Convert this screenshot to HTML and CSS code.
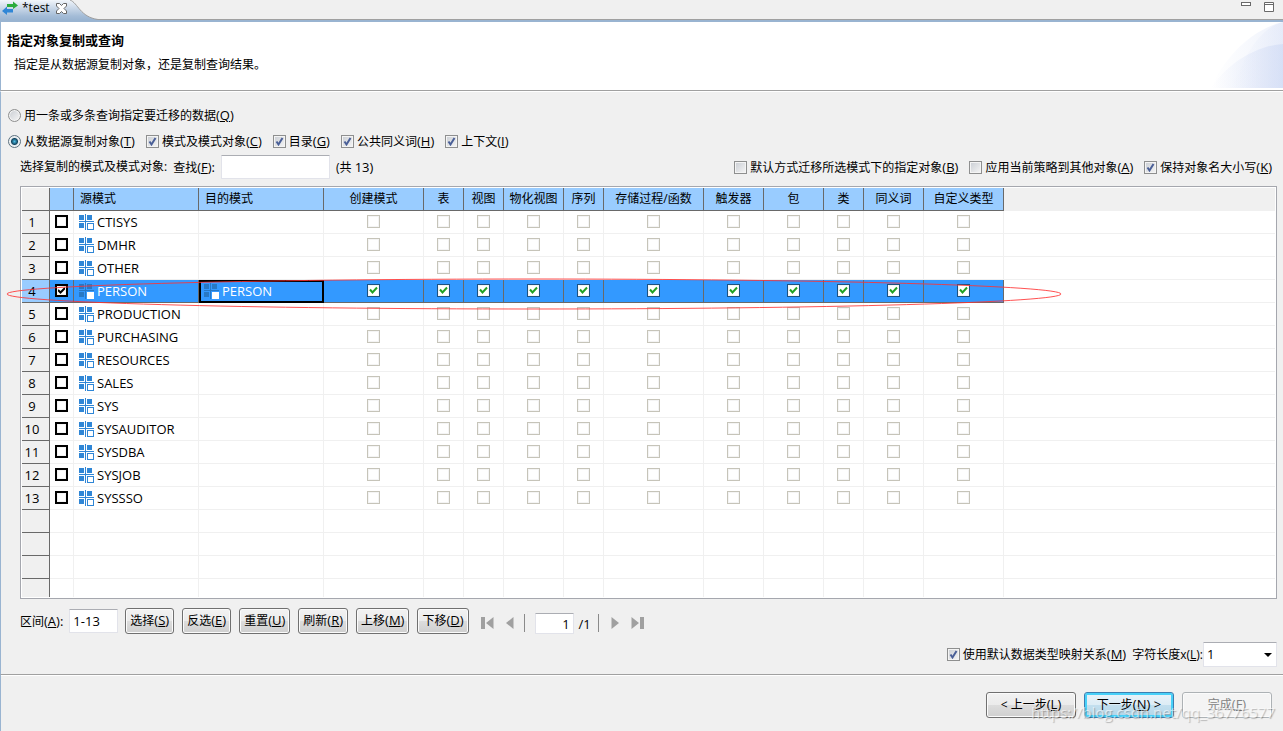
FILE: index.html
```html
<!DOCTYPE html>
<html lang="zh-CN">
<head>
<meta charset="utf-8">
<title>test</title>
<link rel="stylesheet" href="styles.css">
</head>
<body>
<div class="editor">
  <div class="tabbar">
    <div class="tab">
      <svg class="tab-shape" width="100" height="20" viewBox="0 0 100 20" aria-hidden="true">
        <defs><linearGradient id="tabFill" x1="0" y1="0" x2="0" y2="1"><stop offset="0" stop-color="#f1f5fa"/><stop offset=".8" stop-color="#a4bcd7"/><stop offset="1" stop-color="#99b4d1"/></linearGradient></defs>
        <path d="M0 0H70C78 3 80 17 98 19.5V20H0Z" fill="url(#tabFill)"/>
        <path d="M70 0C78 3 80 17 98 19.5" fill="none" stroke="#a0a0a0"/>
      </svg>
      <svg class="tab-icon" width="16" height="14" viewBox="0 0 16 14" aria-hidden="true">
        <path d="M5 3H11V0.500L16 4.500L11 8V6H5Z" fill="#2bab3c"/>
        <path d="M11 8H5V5.500L0 10L5 14V11.500H11Z" fill="#2f86d6"/>
      </svg>
      <span class="tab-title">*test</span>
      <button class="tab-close" aria-label="关闭"><svg width="11" height="11" viewBox="0 0 11 11"><path d="M.5.5H3.500L5.500 2.500L7.500.5H10.500V3L8 5.500L10.500 8V10.500H7.500L5.500 8.500L3.500 10.500H.5V8L3 5.500L.5 3Z" fill="#fff" stroke="#666"/></svg></button>
    </div>
    <div class="window-tools">
      <button aria-label="最小化"><svg width="10" height="10" viewBox="0 0 10 10"><rect x=".5" y=".5" width="9" height="3" fill="#fff" stroke="#696969"/></svg></button>
      <button aria-label="最大化"><svg width="10" height="10" viewBox="0 0 10 10"><path d="M.5.5H9.500V9.500H.5ZM.5 2.500H9.500" fill="#fff" stroke="#696969"/></svg></button>
    </div>
  </div>

  <header class="banner">
    <div>
      <h1>指定对象复制或查询</h1>
      <p>指定是从数据源复制对象，还是复制查询结果。</p>
    </div>
    <svg class="banner-art" width="72" height="66" viewBox="0 0 72 66" aria-hidden="true">
      <defs><linearGradient id="arc"><stop offset="0" stop-color="#dbe3f7" stop-opacity="0"/><stop offset="1" stop-color="#cdd8f4" stop-opacity=".6"/></linearGradient></defs>
      <path d="M0 66C12 38 38 8 72 0V66Z" fill="url(#arc)" opacity=".6"/>
      <path d="M34 38C42 20 56 4 72 0V66H20Z" fill="url(#arc)" opacity=".4"/>
      <path d="M0 66C16 42 44 24 72 22V66Z" fill="url(#arc)"/>
    </svg>
  </header>

  <main class="content">
    <div class="options">
      <label class="choice"><input type="radio" name="mode"><span>用一条或多条查询指定要迁移的数据<span class="key">(<u>Q</u>)</span></span></label>
    </div>
    <div class="options second">
      <label class="choice"><input type="radio" name="mode" checked><span>从数据源复制对象<span class="key">(<u>T</u>)</span></span></label>
      <label class="choice"><input type="checkbox" checked><span>模式及模式对象<span class="key">(<u>C</u>)</span></span></label>
      <label class="choice"><input type="checkbox" checked><span>目录<span class="key">(<u>G</u>)</span></span></label>
      <label class="choice"><input type="checkbox" checked><span>公共同义词<span class="key">(<u>H</u>)</span></span></label>
      <label class="choice"><input type="checkbox" checked><span>上下文<span class="key">(<u>I</u>)</span></span></label>
    </div>
    <div class="filter">
      <span>选择复制的模式及模式对象:</span>
      <label for="find">查找<span class="key">(<u>F</u>):</span></label>
      <input class="field find" id="find" type="text">
      <span>(共 <span class="key">13)</span></span>
      <div class="filter-options">
        <label class="choice"><input type="checkbox"><span>默认方式迁移所选模式下的指定对象<span class="key">(<u>B</u>)</span></span></label>
        <label class="choice"><input type="checkbox"><span>应用当前策略到其他对象<span class="key">(<u>A</u>)</span></span></label>
        <label class="choice"><input type="checkbox" checked><span>保持对象名大小写<span class="key">(<u>K</u>)</span></span></label>
      </div>
    </div>

    <div class="grid-frame">
      <table class="grid">
        <colgroup>
          <col class="w28"><col class="w24"><col class="w125"><col class="w125"><col class="w100"><col class="w40"><col class="w40"><col class="w60"><col class="w40"><col class="w100"><col class="w60"><col class="w60"><col class="w40"><col class="w60"><col class="w80"><col>
        </colgroup>
        <thead>
          <tr><th class="rownum"></th><th></th><th class="left">源模式</th><th class="left">目的模式</th><th>创建模式</th><th>表</th><th>视图</th><th>物化视图</th><th>序列</th><th>存储过程/函数</th><th>触发器</th><th>包</th><th>类</th><th>同义词</th><th>自定义类型</th><th class="rest"></th></tr>
        </thead>
        <tbody id="rows"></tbody>
      </table>
      <svg class="mark" width="1056" height="32" viewBox="0 0 1056 32" aria-hidden="true"><ellipse cx="528" cy="16" rx="527" ry="15" fill="none" stroke="#f33" stroke-width="1" opacity=".85"/></svg>
    </div>

    <div class="toolbar">
      <label for="range">区间<span class="key">(<u>A</u>):</span></label>
      <input class="field range" id="range" type="text" value="1-13">
      <div class="actions">
        <button class="btn">选择<span class="key">(<u>S</u>)</span></button>
        <button class="btn">反选<span class="key">(<u>E</u>)</span></button>
        <button class="btn">重置<span class="key">(<u>U</u>)</span></button>
        <button class="btn">刷新<span class="key">(<u>R</u>)</span></button>
        <button class="btn">上移<span class="key">(<u>M</u>)</span></button>
        <button class="btn">下移<span class="key">(<u>D</u>)</span></button>
      </div>
      <div class="pager">
        <button aria-label="首页"><svg width="13" height="14" viewBox="0 0 13 14"><path d="M0 1H4V13H0ZM12.500 1V13L5 7Z"/></svg></button>
        <button aria-label="上一页"><svg width="8" height="14" viewBox="0 0 8 14"><path d="M7.500 1V13L0 7Z"/></svg></button>
        <span class="sep"></span>
        <input class="field page" type="text" value="1" aria-label="页码">
        <span class="total">/1</span>
        <span class="sep"></span>
        <button aria-label="下一页"><svg width="8" height="14" viewBox="0 0 8 14"><path d="M.5 1V13L8 7Z"/></svg></button>
        <button aria-label="末页"><svg width="13" height="14" viewBox="0 0 13 14"><path d="M9 1H13V13H9ZM.5 1V13L8 7Z"/></svg></button>
      </div>
    </div>

    <div class="mapping">
      <label class="choice"><input type="checkbox" checked><span>使用默认数据类型映射关系<span class="key">(<u>M</u>)</span></span></label>
      <div class="length">
        <label for="len">字符长度x(<u>L</u>):</label>
        <select id="len"><option>1</option><option>2</option></select>
      </div>
    </div>
  </main>

  <footer class="footer">
    <button class="btn wide">&lt; 上一步<span class="key">(<u>L</u>)</span></button>
    <button class="btn wide primary">下一步<span class="key">(<u>N</u>) &gt;</span></button>
    <button class="btn wide" disabled>完成<span class="key">(<u>F</u>)</span></button>
    <span class="watermark">https://blog.csdn.net/qq_36776577</span>
  </footer>
</div>
<script src="rows.js"></script>
</body>
</html>
```

FILE: styles.css
```css
* { box-sizing: border-box; }

body {
  margin: 0;
  background: #f0f0f0;
  color: #000;
  font: 12px/16px "Open Sans", "Noto Sans CJK SC", sans-serif;
}

button, input, select { font: inherit; color: inherit; margin: 0; }
h1, p { margin: 0; }
svg { display: block; }
.key { font-size: 13px; }
u { text-underline-offset: 1px; }

.editor {
  min-height: 100vh;
  display: flex;
  flex-direction: column;
}

/* tab strip */
.tabbar {
  display: flex;
  justify-content: space-between;
  height: 22px;
  border-bottom: 2px solid #99b4d1;
  background: linear-gradient(#a0a0a0, #a0a0a0) bottom / 100% 1px no-repeat;
}
.tab {
  position: relative;
  display: flex;
  align-items: center;
  width: 100px;
  height: 20px;
  padding: 0 0 4px 2px;
}
.tab-shape { position: absolute; left: 0; top: 0; }
.tab-icon, .tab-title, .tab-close { position: relative; }
.tab-title { margin: 0 6px 0 4px; font-size: 12px; }
.tab-close, .window-tools button, .pager button {
  border: 0;
  padding: 0;
  background: none;
}
.window-tools { display: flex; gap: 13px; padding: 2px 9px 0 0; align-items: flex-start; }

/* title banner */
.banner {
  display: flex;
  justify-content: space-between;
  border-left: 1px solid #99b4d1;
  border-bottom: 1px solid #a0a0a0;
  background: #fff;
}
.banner h1 { padding: 9px 0 0 6px; font-size: 13px; line-height: 18px; }
.banner p { padding: 7px 0 0 13px; line-height: 18px; }
.banner-art { margin-bottom: 2px; }

.content {
  padding: 15px 6px 7px 7px;
  border-top: 1px solid #fff;
  border-left: 1px solid #99b4d1;
}

.options { display: flex; gap: 11px; height: 16px; }
.options.second { margin-top: 10px; }
.choice { display: flex; align-items: center; gap: 3px; white-space: nowrap; }

input[type="checkbox"], input[type="radio"] {
  appearance: none;
  flex: none;
  width: 13px;
  height: 13px;
  border: 1px solid #8e8f8f;
  background: linear-gradient(135deg, #c9cdd3, #f6f6f6);
  box-shadow: inset 0 0 0 1px #f4f4f4;
}
input[type="checkbox"]:checked {
  background:
    url("data:image/svg+xml,%3Csvg xmlns='http://www.w3.org/2000/svg' viewBox='0 0 11 11'%3E%3Cpath d='M2.500 5.500L4.500 8.500L8.500 2' fill='none' stroke='%234a5f97' stroke-width='2'/%3E%3C/svg%3E"),
    linear-gradient(135deg, #c9cdd3, #f6f6f6);
}
input[type="radio"] { border-radius: 50%; }
input[type="radio"]:checked {
  border-color: #5d7280;
  background: radial-gradient(circle, #4fc0e8 0, #12455f 3px, #e2e9ee 4px);
}

.filter {
  display: flex;
  align-items: center;
  gap: 6px;
  height: 24px;
  margin: 6px 0 7px;
  padding-left: 12px;
  white-space: nowrap;
}
.filter-options { display: flex; gap: 11px; margin-left: auto; padding-right: 5px; }

.field {
  height: 24px;
  border: 1px solid #e2e3ea;
  border-top-color: #abadb3;
  border-radius: 1px;
  padding: 0 3px;
  background: #fff;
  font-size: 13px;
}
.find { width: 109px; }

/* schema grid */
.grid-frame {
  position: relative;
  margin-left: 12px;
  padding: 1px;
  border: 1px solid #a5a7ae;
  background: #fff;
}
.grid {
  width: 100%;
  table-layout: fixed;
  border-collapse: separate;
  border-spacing: 0;
}
.w24 { width: 24px; }
.w28 { width: 28px; }
.w40 { width: 40px; }
.w60 { width: 60px; }
.w80 { width: 80px; }
.w100 { width: 100px; }
.w125 { width: 125px; }

.grid th, .grid td {
  height: 23px;
  padding: 0;
  border-right: 1px solid #f0f0f0;
  border-bottom: 1px solid #f0f0f0;
  text-align: center;
  white-space: nowrap;
  font-weight: 400;
}
.grid td { font-size: 13px; padding-bottom: 1px; }
.grid thead th {
  border-color: #696969;
  background: #9cf;
}
.grid .left { padding-left: 6px; text-align: left; }
.grid .rest { border-right: 0; }
.grid thead .rest { background: #f0f0f0; border-color: #f0f0f0; }
.grid .rownum {
  border-color: #696969;
  background: #f0f0f0;
  font-size: 13px;
  padding-right: 7px;
}
.grid .short td, .grid .short th { height: 18px; border-bottom: 0; }
.grid .name { padding: 0 0 0 5px; text-align: left; }
.entry { display: flex; align-items: center; gap: 3px; color: #000; }
.entry svg { fill: #2f86d6; }
.entry .hollow { fill: #fff; stroke: #2f86d6; }

.grid input { display: block; margin: 0 auto; }
.grid input[type="checkbox"]:disabled {
  border-color: #c6c4b9;
  background: #fff;
}
.grid input.pick {
  border: 2px solid #000;
  background: #fff;
}
.grid input.pick:checked {
  background: #fff url("data:image/svg+xml,%3Csvg xmlns='http://www.w3.org/2000/svg' viewBox='0 0 9 9'%3E%3Cpath d='M1 4L3.500 6.500L8 2' fill='none' stroke='%23000' stroke-width='2'/%3E%3C/svg%3E");
}
.grid input.part:checked {
  border-color: #1c5180;
  background: #fff url("data:image/svg+xml,%3Csvg xmlns='http://www.w3.org/2000/svg' viewBox='0 0 11 11'%3E%3Cpath d='M2 4.500L4.500 7.500L9 2.500' fill='none' stroke='%2321a121' stroke-width='2'/%3E%3C/svg%3E");
}

.grid .selected td { background: #39f; border-color: #696969; }
.grid .selected .rownum { background: #9cf; }
.grid .selected .rest { background: #fff; border-color: #f0f0f0; }
.selected .entry { color: #fff; }
.selected .entry svg { fill: #2878c4; }
.selected .entry .hollow { stroke: #fff; }
.grid .selected .active { outline: 2px solid #000; outline-offset: -2px; }

.mark { position: absolute; left: -15px; top: 91px; }

/* range and paging */
.toolbar {
  display: flex;
  align-items: center;
  height: 26px;
  margin-top: 9px;
  padding-left: 12px;
  white-space: nowrap;
}
.range { width: 49px; margin: 0 7px 0 6px; }
.actions { display: flex; gap: 8px; }
.btn {
  height: 26px;
  padding: 0 4px 2px;
  border: 1px solid #707070;
  border-radius: 3px;
  background: linear-gradient(#f2f2f2, #ebebeb 50%, #ddd 50%, #cfcfcf);
  box-shadow: inset 0 0 0 1px #fbfbfb;
  line-height: 16px;
  white-space: nowrap;
}
.pager { display: flex; align-items: center; padding: 5px 0 0 12px; height: 26px; }
.pager svg { fill: #a0a0a0; }
.pager button { margin-bottom: 2px; }
.pager button + button { margin-left: 12px; }
.sep { width: 1px; height: 18px; margin: 0 10px 2px; background: #8a8a8a; }
.page { width: 39px; height: 21px; text-align: right; }
.total { margin-left: 5px; font-size: 13px; }
.total + .sep { margin: 0 12px 2px 7px; }

.mapping {
  display: flex;
  justify-content: flex-end;
  align-items: center;
  gap: 6px;
  margin-top: 8px;
}
.length { display: flex; align-items: center; }
select {
  appearance: none;
  width: 74px;
  height: 25px;
  padding: 0 3px 2px;
  border: 1px solid #e2e3ea;
  border-top-color: #abadb3;
  border-radius: 1px;
  background: #fff url("data:image/svg+xml,%3Csvg xmlns='http://www.w3.org/2000/svg' width='8' height='4'%3E%3Cpath d='M0 0H8L4 4Z'/%3E%3C/svg%3E") right 4px center no-repeat;
}
select, select option { font-size: 13px; }

.footer {
  position: relative;
  flex: 1;
  display: flex;
  justify-content: flex-end;
  align-items: flex-start;
  gap: 8px;
  padding: 17px 11px 13px;
  border-top: 1px solid #a0a0a0;
  border-left: 1px solid #99b4d1;
  box-shadow: inset 0 1px #fff;
}
.wide { width: 90px; }
.primary {
  border-color: #3c7fb1;
  background: linear-gradient(#eaf3f9, #dcecf5 50%, #c3dfee 50%, #b2d6e9);
  box-shadow: inset 0 0 0 2px #48d0f8;
}
.btn:disabled {
  border-color: #adb2b5;
  background: #f4f4f4;
  color: #838383;
}
.watermark {
  position: absolute;
  right: 8px;
  bottom: 9px;
  color: rgba(255, 255, 255, .6);
  font: 15px/20px "Open Sans", sans-serif;
  text-shadow: 1px 1px 1px rgba(0, 0, 0, .25);
  pointer-events: none;
}
```

FILE: rows.js
```js
const names = ["CTISYS", "DMHR", "OTHER", "PERSON", "PRODUCTION", "PURCHASING", "RESOURCES",
  "SALES", "SYS", "SYSAUDITOR", "SYSDBA", "SYSJOB", "SYSSSO"];
const parts = ["创建模式", "表", "视图", "物化视图", "序列", "存储过程/函数", "触发器", "包", "类", "同义词", "自定义类型"];

const icon = `<svg width="15" height="16" viewBox="0 0 15 16" aria-hidden="true">
  <path d="M0 1H5V6H0ZM8 1H13V6H8ZM0 9H5V14H0ZM6 0H7V16H6ZM0 7H15V8H0Z"/>
  <rect class="hollow" x="8.500" y="9.500" width="6" height="6"/></svg>`;
const entry = (name) => `<div class="entry">${icon}<span>${name}</span></div>`;

const rows = names.map((name, i) => {
  const on = name === "PERSON";
  const cells = parts.map((part) =>
    `<td><input class="part" type="checkbox" aria-label="${name} ${part}" ${on ? "checked" : "disabled"}></td>`).join("");
  return `<tr class="${on ? "selected" : ""}"><th class="rownum">${i + 1}</th>
    <td><input class="pick" type="checkbox" aria-label="${name}" ${on ? "checked" : ""}></td>
    <td class="name">${entry(name)}</td>
    <td class="name ${on ? "active" : ""}">${on ? entry(name) : ""}</td>${cells}<td class="rest"></td></tr>`;
});

for (let i = 0; i < 4; i++) {
  rows.push(`<tr class="${i === 3 ? "short" : ""}"><th class="rownum"></th>${"<td></td>".repeat(14)}<td class="rest"></td></tr>`);
}
document.getElementById("rows").innerHTML = rows.join("");
```
